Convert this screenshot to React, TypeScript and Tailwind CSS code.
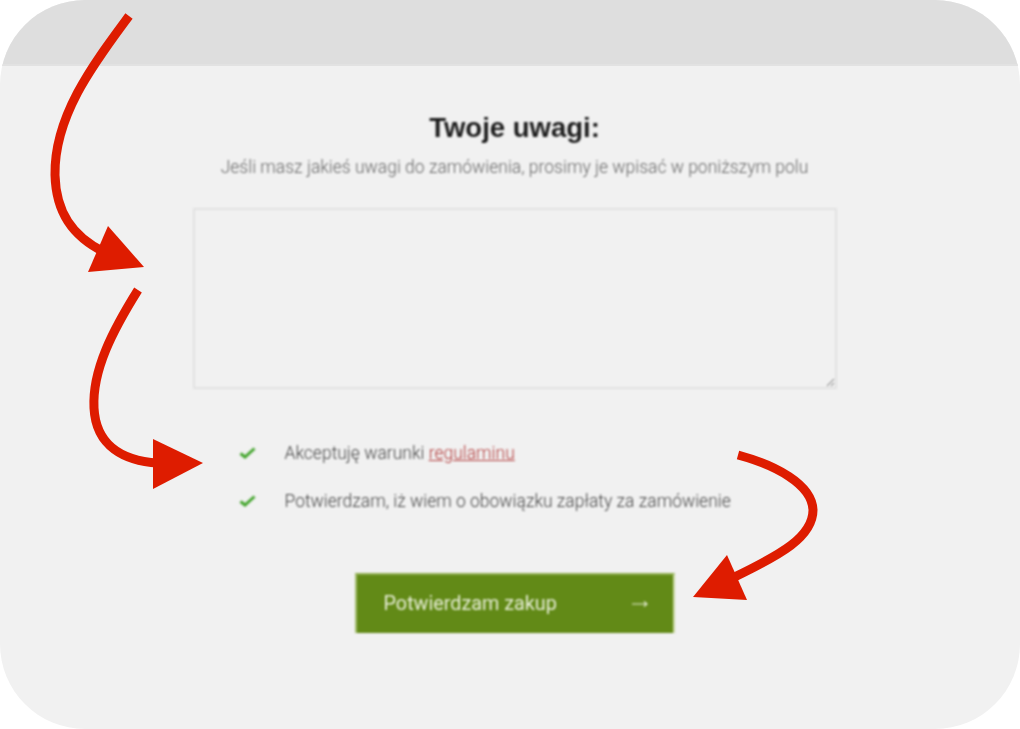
import React from "react";

function Check() {
  return (
    <svg width="18" height="14" viewBox="0 0 18 14" className="shrink-0">
      <path d="M1.5 7.5 L6 11 L15.5 2.5" fill="none" stroke="#45a62f" strokeWidth="3" />
    </svg>
  );
}

function Arrows() {
  return (
    <svg width="1020" height="729" viewBox="0 0 1020 729" className="absolute left-0 top-0 blur-[0.6px] pointer-events-none">
      <g fill="none" stroke="#de1c00" strokeWidth="9">
        <path d="M129 16 C95 62 54 115 55 175 C56 212 72 236 104 252" />
        <path d="M138 290 C113 330 92 370 94 408 C96 447 125 461 158 463" />
        <path d="M738 455 C775 465 812 484 813 510 C813 541 768 560 733 578" />
      </g>
      <g fill="#de1c00">
        <polygon points="108,226 144,267 88,272" />
        <polygon points="153,439 203,463 153,489" />
        <polygon points="727,555 693,597 747,600" />
      </g>
    </svg>
  );
}

export default function App() {
  return (
    <div className="relative h-[729px] w-[1020px] overflow-hidden bg-white font-['Roboto',sans-serif]">
      <div className="flex h-full flex-col overflow-hidden rounded-[85px] bg-[#f1f1f1]">
        <div className="h-[66px] shrink-0 border-b-2 border-[#e2e2e2] bg-[#dedede]" />
        <div className="flex flex-col items-center pl-[9px] blur-[0.9px]">
          <h1 className="mt-[44px] h-[36px] text-[27.5px] font-bold leading-[36px] text-[#1c1c1c] font-['Liberation_Sans',sans-serif]">
            Twoje uwagi:
          </h1>
          <p className="mt-[9px] h-[24px] text-[17.5px] font-light leading-[24px] text-[#666]">
            Jeśli masz jakieś uwagi do zamówienia, prosimy je wpisać w poniższym polu
          </p>
          <textarea className="mt-[29px] block h-[181px] w-[644px] border-2 border-[#e2e2e2] bg-[#f1f1f1] outline-none" />
          <div className="mt-[53px] flex w-[644px] flex-col gap-[26px] pl-[46px] text-[17.5px] font-light leading-[22px] text-[#444]">
            <div className="flex items-center gap-[28px]">
              <Check />
              <span>
                Akceptuję warunki <a className="text-[#b23a3a] underline">regulaminu</a>
              </span>
            </div>
            <div className="flex items-center gap-[28px]">
              <Check />
              <span>Potwierdzam, iż wiem o obowiązku zapłaty za zamówienie</span>
            </div>
          </div>
          <div className="mt-[61px] flex h-[60px] w-[320px] items-center justify-between border-x-2 border-t-2 border-l-[#a3bd6c] border-r-[#c6d79f] border-t-[#8fae4f] bg-[#628a17] pl-[27px] pr-[25px] text-[19.8px] text-[#e8efd8]">
            <span>Potwierdzam zakup</span>
            <svg width="17" height="10" viewBox="0 0 17 10">
              <path d="M1 5 H16 M13 2.5 L16 5 L13 7.5" fill="none" stroke="#e8efd8" strokeWidth="1.1" />
            </svg>
          </div>
        </div>
      </div>
      <Arrows />
    </div>
  );
}
